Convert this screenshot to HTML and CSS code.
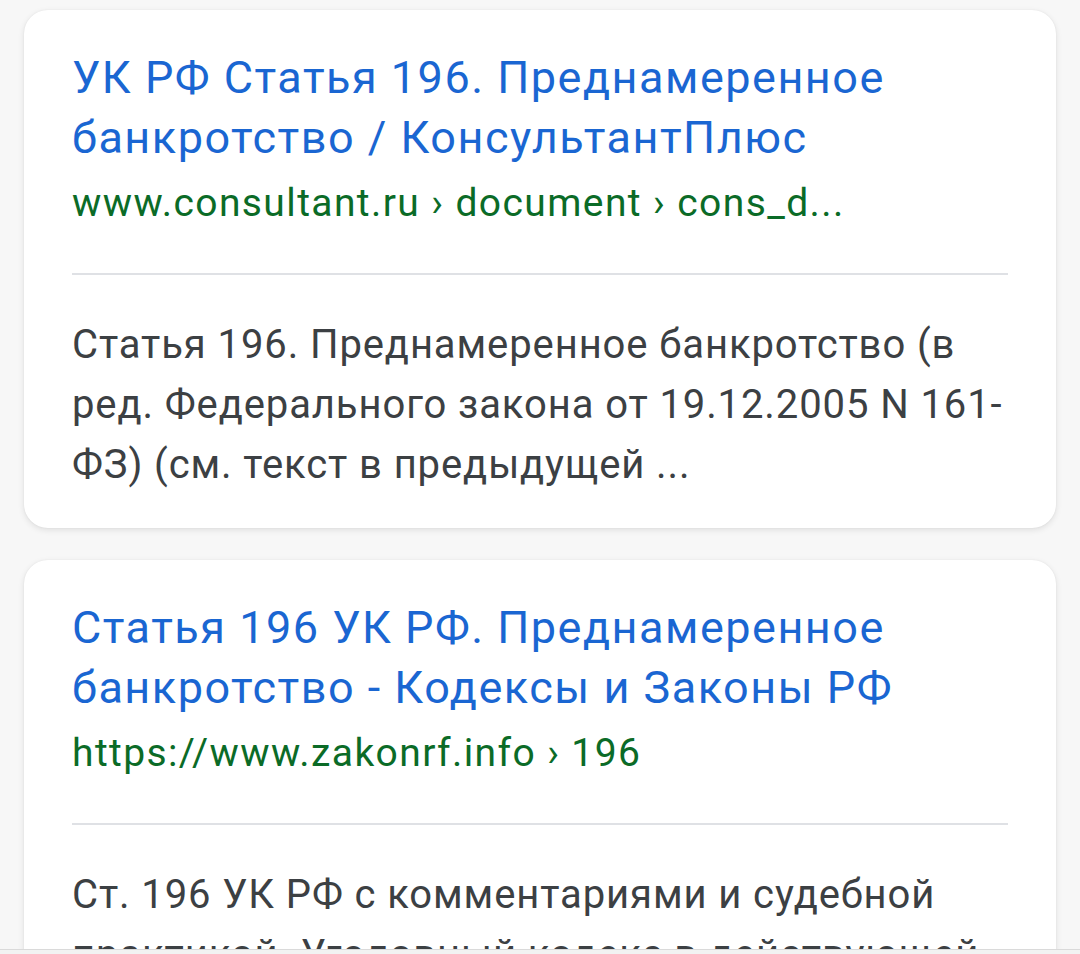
FILE: index.html
```html
<!DOCTYPE html>
<html lang="ru">
<head>
<meta charset="utf-8">
<title>Результаты поиска</title>
<link rel="stylesheet" href="styles.css">
</head>
<body>
<main class="results">
  <article class="card">
    <a class="title" href="#">УК РФ Статья 196. Преднамеренное банкротство / КонсультантПлюс</a>
    <div class="url">www.consultant.ru › document › cons_d...</div>
    <hr class="divider">
    <p class="snippet">Статья 196. Преднамеренное банкротство (в ред. Федерального закона от 19.12.2005 N 161-<wbr>ФЗ) (см. текст в предыдущей ...</p>
  </article>
  <article class="card">
    <a class="title" href="#">Статья 196 УК РФ. Преднамеренное банкротство - Кодексы и Законы РФ</a>
    <div class="url">https://www.zakonrf.info › 196</div>
    <hr class="divider">
    <p class="snippet">Ст. 196 УК РФ с комментариями и судебной практикой. Уголовный кодекс в действующей редакции с последними изменениями.</p>
  </article>
</main>
<div class="nav-edge"></div>
</body>
</html>
```

FILE: styles.css
```css
html, body {
  margin: 0;
  padding: 0;
}
body {
  background: #f7f7f7;
  font-family: Roboto, "Noto Sans", "Liberation Sans", sans-serif;
  overflow: hidden;
  height: 954px;
}
.results {
  display: flex;
  flex-direction: column;
  gap: 32px;
  padding: 10px 24px 0 24px;
}
.card {
  background: #ffffff;
  border-radius: 24px;
  box-shadow: 0 2px 6px rgba(0, 0, 0, 0.10), 0 0 2px rgba(0, 0, 0, 0.06);
  padding: 38px 48px 33px 48px;
}
.title {
  display: block;
  color: #1a66d2;
  text-decoration: none;
  font-size: 45px;
  letter-spacing: 1.5px;
  line-height: 60px;
}
.url {
  color: #0b6b27;
  font-size: 39px;
  letter-spacing: 1.4px;
  line-height: 60px;
  margin-top: 5px;
  white-space: nowrap;
}
.divider {
  border: none;
  height: 2px;
  background: #dfe1e5;
  margin: 40px 0 40px 0;
}
.snippet {
  margin: 0;
  color: #3c4043;
  font-size: 40px;
  letter-spacing: 0.9px;
  line-height: 60px;
}
.nav-edge {
  position: fixed;
  left: 0;
  right: 0;
  bottom: 0;
  height: 4px;
  background: #f2f2f2;
  border-top: 1px solid #dadada;
}
```
